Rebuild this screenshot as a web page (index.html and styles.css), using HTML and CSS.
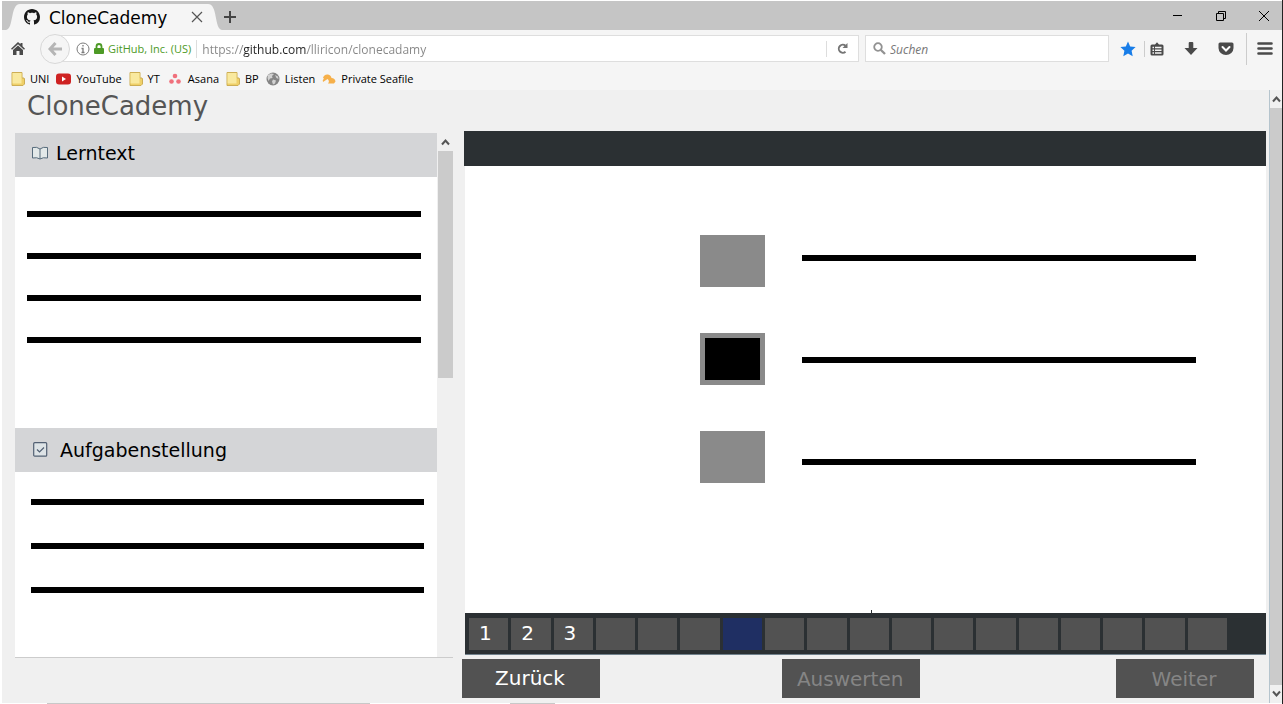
FILE: index.html
```html
<!DOCTYPE html>
<html lang="de">
<head>
<meta charset="utf-8">
<meta name="viewport" content="width=device-width, initial-scale=1">
<title>CloneCademy</title>
<link rel="stylesheet" href="styles.css">
</head>
<body>
<div class="window">
  <header class="titlebar">
    <div class="tab">
      <svg class="tab-edge" width="14" height="26" viewBox="0 0 14 26" aria-hidden="true"><path d="M0 26C8 25 4 0 14 0V26Z" fill="#f5f5f5"/></svg>
      <div class="tab-body">
        <svg width="16" height="16" viewBox="0 0 16 16" aria-hidden="true"><path fill="#191919" d="M8 0C3.58 0 0 3.58 0 8c0 3.54 2.29 6.53 5.47 7.59.4.07.55-.17.55-.38 0-.19-.01-.82-.01-1.49-2.01.37-2.53-.49-2.69-.94-.09-.23-.48-.94-.82-1.13-.28-.15-.68-.52-.01-.53.63-.01 1.08.58 1.23.82.72 1.21 1.87.87 2.33.66.07-.52.28-.87.51-1.07-1.78-.2-3.64-.89-3.64-3.95 0-.87.31-1.59.82-2.15-.08-.2-.36-1.02.08-2.12 0 0 .67-.21 2.2.82.64-.18 1.32-.27 2-.27s1.36.09 2 .27c1.53-1.04 2.2-.82 2.2-.82.44 1.1.16 1.92.08 2.12.51.56.82 1.27.82 2.15 0 3.07-1.87 3.75-3.65 3.95.29.25.54.73.54 1.48 0 1.07-.01 1.93-.01 2.2 0 .21.15.46.55.38A8.01 8.01 0 0 0 16 8c0-4.42-3.58-8-8-8z"/></svg>
        <span class="tab-title">CloneCademy</span>
        <button class="icon-button tab-close" aria-label="Tab schließen"><svg width="12" height="12" viewBox="0 0 12 12"><path d="M1 1L11 11M11 1L1 11" stroke="#555" stroke-width="1.2"/></svg></button>
      </div>
      <svg class="tab-edge" width="14" height="26" viewBox="0 0 14 26" aria-hidden="true"><path d="M14 26C6 25 10 0 0 0V26Z" fill="#f5f5f5"/></svg>
    </div>
    <button class="icon-button" aria-label="Neuer Tab"><svg width="12" height="12" viewBox="0 0 12 12"><path d="M6 0V12M0 6H12" stroke="#444" stroke-width="2"/></svg></button>
    <div class="window-controls">
      <button class="icon-button" aria-label="Minimieren"><svg width="10" height="10" viewBox="0 0 10 10"><path d="M0 4.5H9" stroke="#000"/></svg></button>
      <button class="icon-button" aria-label="Wiederherstellen"><svg width="10" height="10" viewBox="0 0 10 10"><path d="M.5 2.5H7.5V9.500H.5ZM2.500 2.500V.5H9.500V7.500H7.500" fill="none" stroke="#000"/></svg></button>
      <button class="icon-button" aria-label="Schließen"><svg width="10" height="10" viewBox="0 0 10 10"><path d="M0 0L10 10M10 0L0 10" stroke="#000"/></svg></button>
    </div>
  </header>

  <nav class="toolbar" aria-label="Navigation">
    <button class="icon-button home" aria-label="Startseite"><svg width="14" height="13" viewBox="0 0 14 13"><path d="M7 0L9.500 2.300V1H11.500V4.200L14 6.700 13 7.700 7 2.300 1 7.700 0 6.700ZM7 3.500L12 8V13H8.500V9H5.500V13H2V8Z" fill="#4a4a4a"/></svg></button>
    <button class="icon-button back" aria-label="Zurück"><svg width="14" height="14" viewBox="0 0 14 14"><path d="M7.500 1L2 7L7.500 13M2.500 7H14" fill="none" stroke="#b5b5b5" stroke-width="3"/></svg></button>
    <div class="address">
      <svg width="14" height="14" viewBox="0 0 14 14" aria-hidden="true"><circle cx="7" cy="7" r="6" fill="none" stroke="#7b7b7b"/><path d="M7 3V4.600M5.500 6.500H7V10M5.500 10.500H8.500" stroke="#7b7b7b" stroke-width="1.300" fill="none"/></svg>
      <svg class="lock" width="10" height="12" viewBox="0 0 10 12" aria-hidden="true"><path d="M2.500 6V3.500a2.500 2.500 0 0 1 5 0V6" fill="none" stroke="#4d9a26" stroke-width="1.800"/><rect y="5" width="10" height="6" rx="1" fill="#4d9a26"/></svg>
      <span class="identity">GitHub, Inc. (US)</span>
      <input class="url" type="text" aria-label="Adresse" value="https://github.com/lliricon/clonecadamy">
      <button class="icon-button reload" aria-label="Neu laden"><svg width="11" height="11" viewBox="0 0 11 11"><path d="M8.500 2.800A4 4 0 1 0 8.500 8.700" fill="none" stroke="#757575" stroke-width="1.900"/><path d="M10.500 0V5H5.500Z" fill="#757575"/></svg></button>
    </div>
    <label class="search">
      <svg width="13" height="13" viewBox="0 0 13 13" aria-hidden="true"><circle cx="5" cy="5" r="3.800" fill="none" stroke="#929292" stroke-width="1.800"/><path d="M7.700 7.700L12 12" stroke="#929292" stroke-width="2.300"/></svg>
      <input class="search-input" type="text" placeholder="Suchen" aria-label="Suchen">
    </label>
    <div class="tools">
      <button class="icon-button" aria-label="Lesezeichen"><svg width="16" height="16" viewBox="0 0 16 16"><path d="M8 .5L10.200 5.500 15.600 6 11.600 9.700 12.700 15.300 8 12.500 3.300 15.300 4.400 9.700 .4 6 5.800 5.500Z" fill="#187de8"/></svg></button>
      <span class="divider"></span>
      <button class="icon-button" aria-label="Lesezeichen anzeigen"><svg width="14" height="14" viewBox="0 0 14 14"><path d="M2 2.500H5L7 .2 9 2.500H12a1.500 1.500 0 0 1 1.500 1.500v8a1.500 1.500 0 0 1-1.500 1.500H2A1.500 1.500 0 0 1 .5 12V4A1.500 1.500 0 0 1 2 2.500Z" fill="#4a4a4a"/><path d="M2.500 5.500H4M5 5.500H11.500M2.500 8.200H4M5 8.200H11.500M2.500 11H4M5 11H11.500" stroke="#f5f5f5" stroke-width="1.400"/></svg></button>
      <button class="icon-button" aria-label="Downloads"><svg width="14" height="14" viewBox="0 0 14 14"><path d="M4.700 1Q4.700 0 5.700 0H8.300Q9.300 0 9.300 1V6H13.500L7 13 .5 6H4.700Z" fill="#4a4a4a"/></svg></button>
      <button class="icon-button" aria-label="Pocket"><svg width="16" height="14" viewBox="0 0 16 14"><path d="M2 .5H14Q15.500 .5 15.500 2V6A7.500 7 0 0 1 .5 6V2Q.5 .5 2 .5Z" fill="#4a4a4a"/><path d="M4.500 5L8 8.500 11.500 5" fill="none" stroke="#fff" stroke-width="2" stroke-linecap="round"/></svg></button>
      <span class="divider divider-tall"></span>
      <button class="icon-button" aria-label="Menü"><svg width="16" height="13" viewBox="0 0 16 13"><path d="M1.500 1.500H14.500M1.500 6.500H14.500M1.500 11.500H14.500" stroke="#4a4a4a" stroke-width="2.600" stroke-linecap="round"/></svg></button>
    </div>
  </nav>

  <nav class="bookmarks" aria-label="Lesezeichen">
    <a class="bookmark" href="#"><svg width="14" height="14" viewBox="0 0 14 14"><path d="M1 .5H11V6H13L13.500 7V12L12 13.500H1Z" fill="#efd069" stroke="#cdae55"/><path d="M1.500 1H10.500V11.500H1.500Z" fill="#f9e99f"/></svg>UNI</a>
    <a class="bookmark" href="#"><svg width="15" height="12" viewBox="0 0 15 12"><rect y=".5" width="15" height="11" rx="3" fill="#cf2323"/><path d="M6 3.500L10 6L6 8.500Z" fill="#fff"/></svg>YouTube</a>
    <a class="bookmark" href="#"><svg width="14" height="14" viewBox="0 0 14 14"><path d="M1 .5H11V6H13L13.500 7V12L12 13.500H1Z" fill="#efd069" stroke="#cdae55"/><path d="M1.500 1H10.500V11.500H1.500Z" fill="#f9e99f"/></svg>YT</a>
    <a class="bookmark" href="#"><svg width="16" height="12" viewBox="0 0 16 12"><g fill="#f0707c"><circle cx="8" cy="3" r="2.300"/><circle cx="4.500" cy="8.500" r="2.300"/><circle cx="11.500" cy="8.500" r="2.300"/></g></svg>Asana</a>
    <a class="bookmark" href="#"><svg width="14" height="14" viewBox="0 0 14 14"><path d="M1 .5H11V6H13L13.500 7V12L12 13.500H1Z" fill="#efd069" stroke="#cdae55"/><path d="M1.500 1H10.500V11.500H1.500Z" fill="#f9e99f"/></svg>BP</a>
    <a class="bookmark" href="#"><svg width="14" height="14" viewBox="0 0 14 14"><circle cx="7" cy="7" r="6.500" fill="#858585"/><path d="M2 3L5 1.500 8 2 6 4 6.500 6 4 6.500 2.500 9 1.500 6ZM9 3L12 4.500 12.500 7 10.500 6ZM7 7.500L10 8.500 9 11.500 7 12.500 6 9.500Z" fill="#d2d2d2"/></svg>Listen</a>
    <a class="bookmark" href="#"><svg width="14" height="12" viewBox="0 0 14 12"><path d="M1 5Q2 1 6 1.500Q9 2 9.500 5Q13 5 13.500 8.500L12 10.500H6Q8 8 5.500 6L1 9Q0 7 2 5.500Z" fill="#f6b04a"/></svg>Private Seafile</a>
  </nav>

  <div class="viewport">
    <main class="page">
      <h1 class="brand">CloneCademy</h1>
      <div class="workspace">
        <aside class="lesson">
          <div class="lesson-content">
            <section>
              <h2 class="section-title"><svg width="16" height="14" viewBox="0 0 16 14" aria-hidden="true"><path d="M8 3Q5 .5 .5 1.500V12Q5 11 8 13Q11 11 15.500 12V1.500Q11 .5 8 3V13" fill="#e2e8e8" stroke="#566b7b"/></svg>Lerntext</h2>
              <div class="text-lines"><span class="line"></span><span class="line"></span><span class="line"></span><span class="line"></span></div>
            </section>
            <section>
              <h2 class="section-title section-title-task"><svg width="15" height="15" viewBox="0 0 15 15" aria-hidden="true"><rect x=".7" y=".7" width="13" height="13.500" rx="1" fill="#dde3e6" stroke="#526073" stroke-width="1.200"/><path d="M4 7.500L6.500 10L11 5.500" fill="none" stroke="#526073" stroke-width="1.200"/></svg>Aufgabenstellung</h2>
              <div class="text-lines text-lines-task"><span class="line"></span><span class="line"></span><span class="line"></span></div>
            </section>
          </div>
          <div class="scrollbar">
            <button class="icon-button scroll-arrow" aria-label="Nach oben"><svg width="9" height="8" viewBox="0 0 9 8"><path d="M1 6.500L4.500 2.500L8 6.500" fill="none" stroke="#555" stroke-width="2"/></svg></button>
            <div class="scroll-thumb"></div>
          </div>
        </aside>

        <div class="exercise">
          <div class="exercise-header"></div>
          <div class="stage">
            <form class="options">
              <div class="boxes">
                <input class="box" type="checkbox" id="answer-a">
                <input class="box" type="checkbox" id="answer-b" checked>
                <input class="box" type="checkbox" id="answer-c">
              </div>
              <div class="answers">
                <label class="line" for="answer-a" aria-label="Antwort 1"></label>
                <label class="line" for="answer-b" aria-label="Antwort 2"></label>
                <label class="line" for="answer-c" aria-label="Antwort 3"></label>
              </div>
            </form>
          </div>
          <nav class="steps" aria-label="Aufgaben">
            <button class="step">1</button><button class="step">2</button><button class="step">3</button>
            <button class="step" aria-label="4"></button><button class="step" aria-label="5"></button><button class="step" aria-label="6"></button>
            <button class="step step-current" aria-label="7"></button><button class="step" aria-label="8"></button><button class="step" aria-label="9"></button>
            <button class="step" aria-label="10"></button><button class="step" aria-label="11"></button><button class="step" aria-label="12"></button>
            <button class="step" aria-label="13"></button><button class="step" aria-label="14"></button><button class="step" aria-label="15"></button>
            <button class="step" aria-label="16"></button><button class="step" aria-label="17"></button><button class="step" aria-label="18"></button>
          </nav>
          <div class="actions">
            <button class="action">Zurück</button>
            <button class="action action-check" disabled>Auswerten</button>
            <button class="action action-next" disabled>Weiter</button>
          </div>
        </div>
      </div>
    </main>
    <div class="scrollbar page-scrollbar">
      <button class="icon-button scroll-arrow" aria-label="Seite nach oben"><svg width="9" height="8" viewBox="0 0 9 8"><path d="M1 6.500L4.500 2.500L8 6.500" fill="none" stroke="#555" stroke-width="2"/></svg></button>
      <div class="scroll-thumb page-thumb"></div>
      <button class="icon-button scroll-arrow" aria-label="Seite nach unten"><svg width="9" height="8" viewBox="0 0 9 8"><path d="M1 1.500L4.500 5.500L8 1.500" fill="none" stroke="#555" stroke-width="2"/></svg></button>
    </div>
  </div>
  <div class="bottom-edge"></div>
</div>
</body>
</html>
```
FILE: styles.css
```css
* {
  box-sizing: border-box;
}

body {
  margin: 0;
  background: #fff;
  font-family: "DejaVu Sans", sans-serif;
}

button,
input {
  font: inherit;
}

svg {
  display: block;
  flex: none;
}

.window {
  display: flex;
  flex-direction: column;
  min-height: 100vh;
  padding: 1px 0 0 2px;
  border-right: 1px solid #222;
}

.icon-button {
  display: flex;
  align-items: center;
  justify-content: center;
  flex: none;
  padding: 0;
  border: 0;
  background: none;
}

/* Title bar */
.titlebar {
  display: flex;
  align-items: center;
  height: 29px;
  padding-left: 4px;
  background: #c5c5c5;
}

.tab {
  display: flex;
  align-self: flex-end;
  height: 26px;
}

.tab-body {
  display: flex;
  align-items: center;
  width: 188px;
  padding-left: 4px;
  background: #f5f5f5;
}

.tab-title {
  padding: 2px 0 0 9px;
  font-size: 17px;
  line-height: 20px;
}

.tab-close {
  margin-left: auto;
  padding-right: 5px;
}

.titlebar > .icon-button {
  padding: 2px 0 0 2px;
}

.window-controls {
  display: flex;
  gap: 33px;
  margin-left: auto;
  padding-right: 13px;
}

/* Toolbar */
.toolbar {
  display: flex;
  align-items: center;
  height: 37px;
  padding-right: 9px;
  background: #f5f5f5;
  font-family: "Open Sans", "Noto Sans", sans-serif;
  font-size: 12px;
}

.home {
  width: 32px;
}

.back {
  position: relative;
  z-index: 1;
  width: 30px;
  height: 30px;
  margin-left: 6px;
  border: 1px solid #d8d8d8;
  border-radius: 50%;
  background: #f5f5f5;
}

.address,
.search {
  display: flex;
  align-items: center;
  height: 27px;
  border: 1px solid #dedede;
  background: #fff;
}

.address {
  flex: 1;
  margin-left: -15px;
  padding-left: 20px;
}

.lock {
  margin: 0 4px;
}

.identity {
  padding-right: 5px;
  border-right: 1px solid #ddd;
  color: #4d9a26;
  font-size: 11px;
  line-height: 18px;
  white-space: nowrap;
}

/* The host part of the address is darker than the rest */
.url {
  flex: 1;
  min-width: 0;
  margin-left: 5px;
  padding: 2px 0 0;
  border: 0;
  background: linear-gradient(90deg, #858585 41px, #222 41px, #222 105px, #858585 105px);
  -webkit-background-clip: text;
  background-clip: text;
  -webkit-text-fill-color: transparent;
}

.reload {
  width: 32px;
  height: 16px;
  border-left: 1px solid #ddd;
}

.search {
  gap: 4px;
  width: 244px;
  margin-left: 6px;
  padding-left: 7px;
}

.search-input {
  flex: 1;
  min-width: 0;
  padding: 2px 0 0;
  border: 0;
  font-style: italic;
}

.search-input::placeholder {
  color: #777;
  opacity: 1;
}

.tools {
  display: flex;
  align-items: center;
  gap: 20px;
  margin-left: 11px;
}

.divider {
  width: 1px;
  height: 16px;
  margin: 0 -15px 0 -12px;
  background: #ccc;
}

.divider-tall {
  height: 32px;
  margin: 0 -10px 0 -8px;
}

.bookmarks {
  display: flex;
  align-items: center;
  gap: 7px;
  height: 23px;
  padding-left: 9px;
  background: #f5f5f5;
}

.bookmark {
  display: flex;
  align-items: center;
  gap: 5px;
  color: #000;
  font-family: "Open Sans", "Noto Sans", sans-serif;
  font-size: 11px;
  line-height: 16px;
  text-decoration: none;
  white-space: nowrap;
}

/* Page */
.viewport {
  display: flex;
  flex: 1;
  background: #f0f0f0;
}

.page {
  display: flex;
  flex: 1;
  flex-direction: column;
  padding: 0 3px 5px 13px;
}

.brand {
  margin: 0;
  padding: 1px 0 10px 12px;
  color: #555;
  font-size: 26px;
  font-weight: 400;
  line-height: 30px;
}

.workspace {
  display: grid;
  flex: 1;
  grid-template-columns: 438fr 802fr;
  gap: 11px;
}

.lesson {
  display: flex;
  margin: 2px 0 40px;
  border-bottom: 1px solid #ccc;
}

.lesson-content {
  flex: 1;
  background: #fff;
}

.section-title {
  display: flex;
  align-items: center;
  gap: 8px;
  height: 44px;
  margin: 0;
  padding: 0 0 4px 17px;
  background: #d4d5d7;
  font-size: 19px;
  font-weight: 400;
}

.section-title-task {
  gap: 12px;
  padding: 0 0 1px 18px;
}

.text-lines {
  display: flex;
  flex-direction: column;
  gap: 36px;
  padding: 34px 16px 85px 12px;
}

.text-lines-task {
  gap: 38px;
  padding: 27px 13px 40px 16px;
}

.line {
  display: block;
  height: 6px;
  background: #000;
}

.scrollbar {
  display: flex;
  flex-direction: column;
  width: 16px;
  padding-left: 1px;
}

.scroll-arrow {
  height: 18px;
}

.scroll-thumb {
  height: 227px;
  background: #cbcbcb;
}

.page-scrollbar {
  width: 13px;
  padding: 0;
  border-left: 1px solid #b5c4cd;
}

.page-thumb {
  flex: 1;
}

/* Exercise */
.exercise {
  display: flex;
  flex-direction: column;
}

.exercise-header {
  height: 35px;
  background: #2b3033;
}

.stage {
  display: flex;
  flex: 1;
  justify-content: flex-end;
  margin-left: 1px;
  padding: 69px 70px 60px 0;
  background: #fff;
}

.options {
  display: flex;
  flex: 0 1 496px;
  gap: 37px;
}

.boxes {
  display: flex;
  flex-direction: column;
  gap: 46px;
}

.box {
  appearance: none;
  width: 65px;
  height: 52px;
  margin: 0;
  border: 5px solid #8a8a8a;
  background: #8a8a8a;
}

.box:checked {
  background: #000;
}

.answers {
  display: flex;
  flex: 1;
  flex-direction: column;
  gap: 96px;
  padding-top: 20px;
}

.steps {
  position: relative;
  display: grid;
  grid-template-columns: repeat(18, 1fr);
  gap: 3px;
  height: 42px;
  margin-left: 1px;
  padding: 5px 39px 4px 4px;
  border-bottom: 1px solid #71818c;
  background: #2b3033;
}

.steps::before {
  position: absolute;
  top: -3px;
  left: 406px;
  width: 1px;
  height: 3px;
  background: #2b3033;
  content: "";
}

.step {
  min-width: 0;
  padding: 0 0 2px 10px;
  border: 0;
  background: #525252;
  color: #fff;
  font-size: 20px;
  line-height: 24px;
  text-align: left;
}

.step-current {
  background: #1f2f63;
}

.actions {
  display: flex;
  margin: 4px 12px 0 -2px;
}

.action {
  width: 138px;
  height: 39px;
  padding: 0 2px 2px 0;
  border: 0;
  background: #525252;
  color: #fff;
  font-size: 20px;
}

.action:disabled {
  padding-bottom: 0;
  color: #858585;
}

.action-check {
  margin-left: 23%;
}

.action-next {
  margin-left: auto;
}

.bottom-edge {
  height: 1px;
  background: linear-gradient(90deg, #fff 45px, #c8c8c8 45px, #c8c8c8 368px, #fff 368px, #fff 508px, #c8c8c8 508px, #c8c8c8 553px, #fff 553px);
}
```
